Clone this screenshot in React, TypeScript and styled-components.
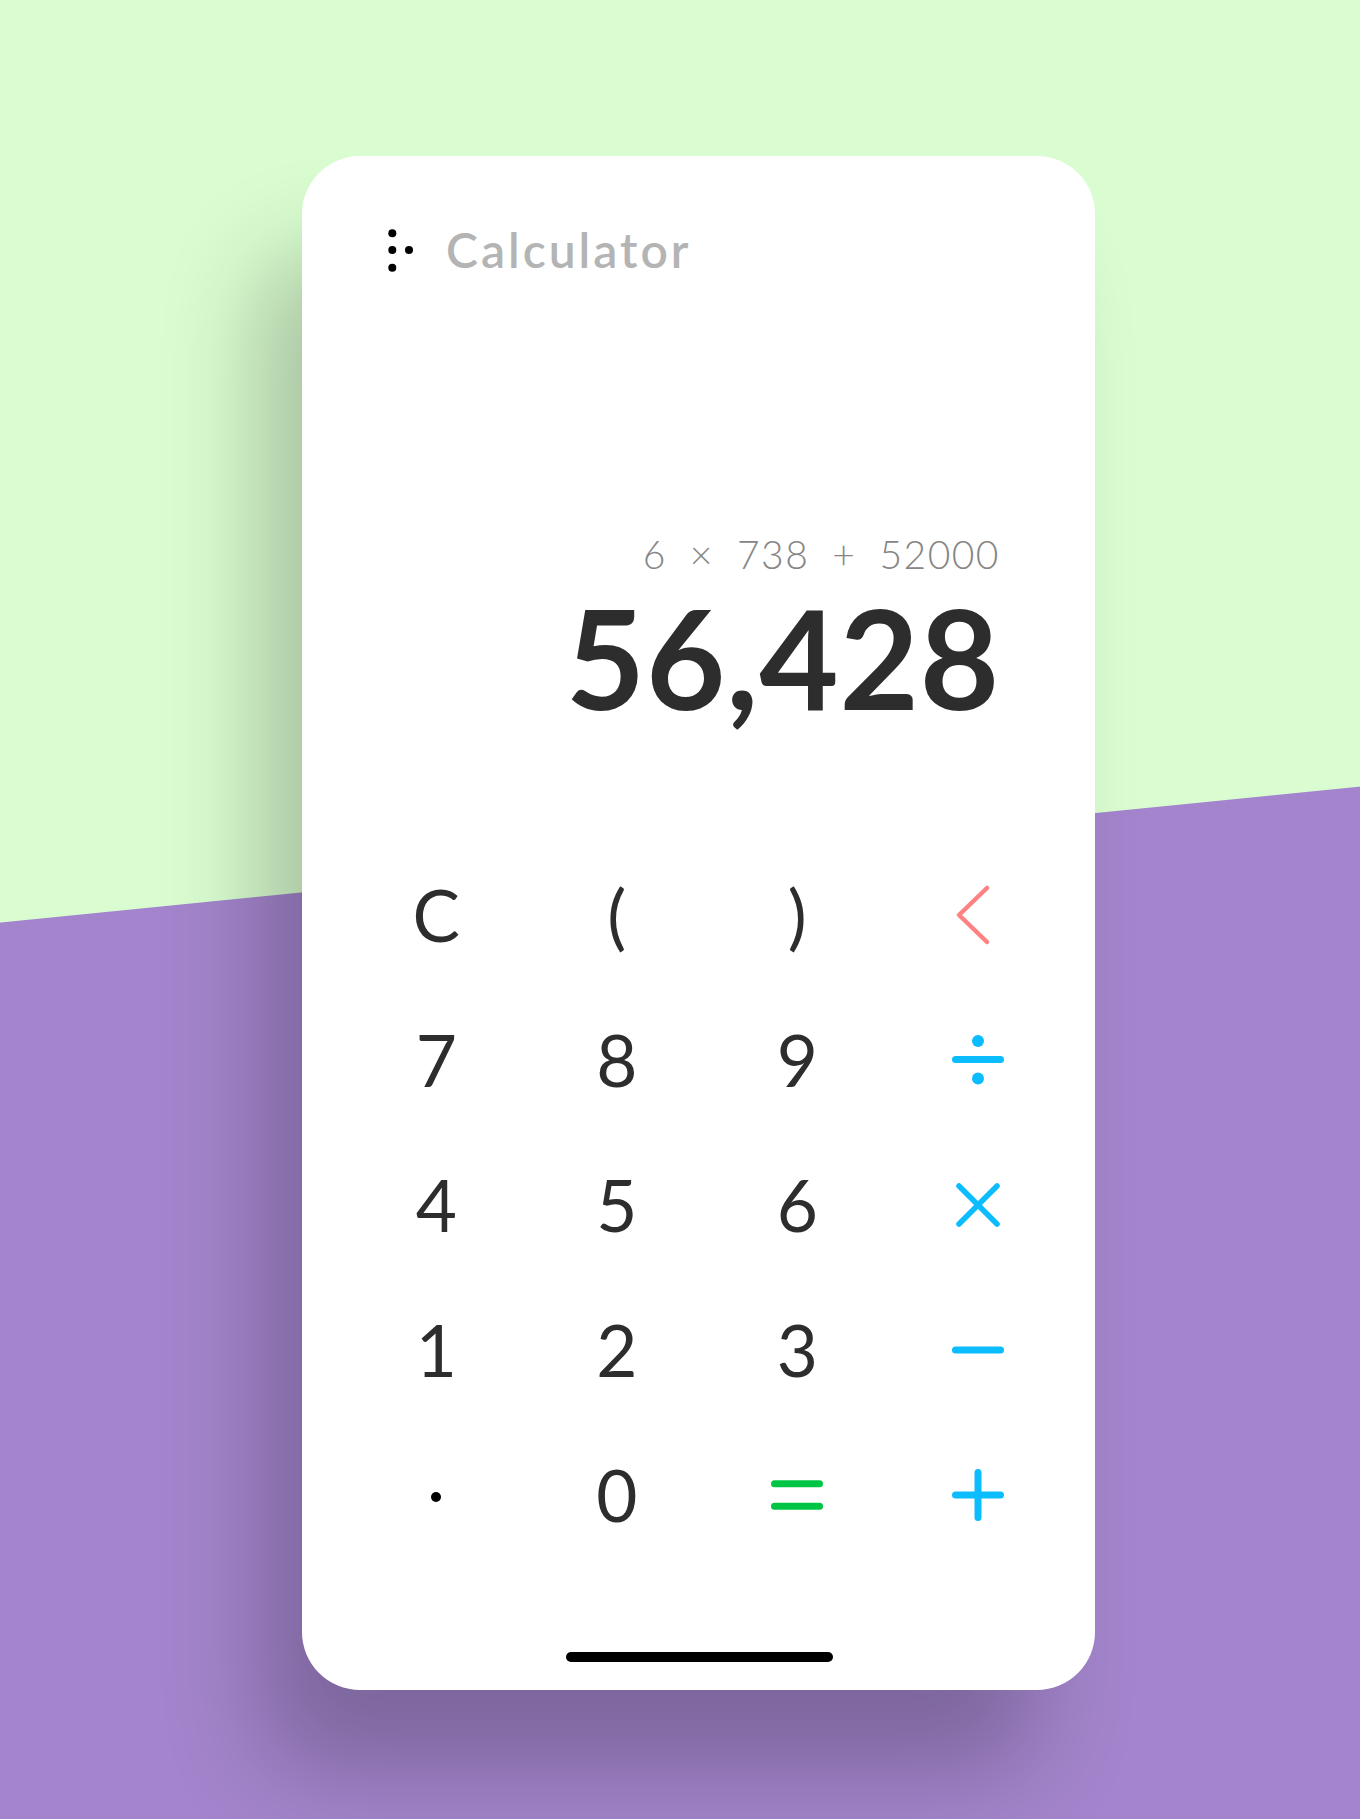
import React from "react";
import styled, { createGlobalStyle } from "styled-components";

const GlobalStyle = createGlobalStyle`
  html, body {
    margin: 0;
    padding: 0;
  }
  body {
    font-family: Lato, "Noto Sans", sans-serif;
  }
`;

const Page = styled.div`
  box-sizing: border-box;
  width: 1360px;
  min-height: 1819px;
  padding: 156px 0 0 302px;
  background: linear-gradient(174.29deg, #d9fdd0 917.5px, #a485cd 918.5px);
  overflow: hidden;
`;

const Card = styled.div`
  box-sizing: border-box;
  width: 793px;
  height: 1534px;
  background: #ffffff;
  border-radius: 58px;
  box-shadow: -50px 90px 100px -10px rgba(0, 0, 0, 0.24);
  display: flex;
  flex-direction: column;
`;

const Header = styled.header`
  display: flex;
  align-items: center;
  gap: 33px;
  height: 60px;
  margin-top: 64px;
  padding-left: 86px;
`;

const Title = styled.h1`
  margin: 0;
  font-family: Lato, sans-serif;
  font-size: 48px;
  font-weight: 600;
  line-height: 1;
  color: #b4b4b4;
  letter-spacing: 3px;
`;

const Display = styled.section`
  display: flex;
  flex-direction: column;
  align-items: flex-end;
  padding-right: 95px;
  margin-top: 255px;
`;

const Expression = styled.div`
  display: flex;
  gap: 23px;
  font-size: 39px;
  font-weight: 300;
  line-height: 1;
  color: #868686;
  letter-spacing: 1.5px;
`;

const Result = styled.div`
  margin-top: 15px;
  font-size: 137px;
  font-weight: 700;
  line-height: 1;
  color: #2d2d2d;
  letter-spacing: 0.8px;
`;

const Keypad = styled.div`
  display: grid;
  grid-template-columns: repeat(4, 180.5px);
  grid-auto-rows: 145px;
  padding-left: 44px;
  margin-top: 118px;
`;

const Key = styled.div`
  display: flex;
  align-items: center;
  justify-content: center;
  padding-bottom: 4px;
  box-sizing: border-box;
  font-size: 71px;
  font-weight: 400;
  line-height: 1;
  color: #2d2d2d;
  cursor: pointer;
  user-select: none;
`;

const Dot = styled.span`
  width: 10px;
  height: 10px;
  border-radius: 50%;
  background: #000;
  margin-bottom: -4px;
`;

const HomeBar = styled.div`
  align-self: center;
  margin: auto 0 28px 1px;
  width: 267px;
  height: 10px;
  border-radius: 5px;
  background: #000;
`;

const BLUE = "#0bbcff";
const GREEN = "#00c544";
const SALMON = "#ff8282";

const MenuDots = () => (
  <svg width="25" height="43" viewBox="0 0 25 43" fill="#000">
    <circle cx="4.3" cy="4.3" r="4" />
    <circle cx="4.3" cy="21" r="4" />
    <circle cx="4.3" cy="38.7" r="4" />
    <circle cx="21" cy="21" r="4" />
  </svg>
);

const Back = () => (
  <svg width="46" height="62" viewBox="0 0 46 62" fill="none">
    <path d="M32 4 L4 31 L32 58" stroke={SALMON} strokeWidth="4.5" strokeLinecap="round" strokeLinejoin="round" />
  </svg>
);

const Divide = () => (
  <svg width="52" height="50" viewBox="0 0 52 50">
    <circle cx="26" cy="6" r="6" fill={BLUE} />
    <line x1="3.5" y1="24.5" x2="48.5" y2="24.5" stroke={BLUE} strokeWidth="7" strokeLinecap="round" />
    <circle cx="26" cy="43.5" r="6" fill={BLUE} />
  </svg>
);

const Times = () => (
  <svg width="52" height="52" viewBox="0 0 52 52">
    <g stroke={BLUE} strokeWidth="5.5" strokeLinecap="round">
      <line x1="7" y1="7" x2="45" y2="45" />
      <line x1="45" y1="7" x2="7" y2="45" />
    </g>
  </svg>
);

const Minus = () => (
  <svg width="52" height="52" viewBox="0 0 52 52">
    <line x1="3.5" y1="26" x2="48.5" y2="26" stroke={BLUE} strokeWidth="7" strokeLinecap="round" />
  </svg>
);

const Plus = () => (
  <svg width="52" height="52" viewBox="0 0 52 52">
    <g stroke={BLUE} strokeWidth="7" strokeLinecap="round">
      <line x1="3.5" y1="26" x2="48.5" y2="26" />
      <line x1="26" y1="3.5" x2="26" y2="48.5" />
    </g>
  </svg>
);

const Equals = () => (
  <svg width="52" height="52" viewBox="0 0 52 52">
    <g stroke={GREEN} strokeWidth="7" strokeLinecap="round">
      <line x1="3.5" y1="14.8" x2="48.5" y2="14.8" />
      <line x1="3.5" y1="37.2" x2="48.5" y2="37.2" />
    </g>
  </svg>
);

export default function App() {
  return (
    <>
      <GlobalStyle />
      <Page>
        <Card>
          <Header>
            <MenuDots />
            <Title>Calculator</Title>
          </Header>
          <Display>
            <Expression>
              <span>6</span>
              <span>×</span>
              <span>738</span>
              <span>+</span>
              <span>52000</span>
            </Expression>
            <Result>56,428</Result>
          </Display>
          <Keypad>
            <Key>C</Key>
            <Key>(</Key>
            <Key>)</Key>
            <Key><Back /></Key>
            <Key>7</Key>
            <Key>8</Key>
            <Key>9</Key>
            <Key><Divide /></Key>
            <Key>4</Key>
            <Key>5</Key>
            <Key>6</Key>
            <Key><Times /></Key>
            <Key>1</Key>
            <Key>2</Key>
            <Key>3</Key>
            <Key><Minus /></Key>
            <Key><Dot /></Key>
            <Key>0</Key>
            <Key><Equals /></Key>
            <Key><Plus /></Key>
          </Keypad>
          <HomeBar />
        </Card>
      </Page>
    </>
  );
}
